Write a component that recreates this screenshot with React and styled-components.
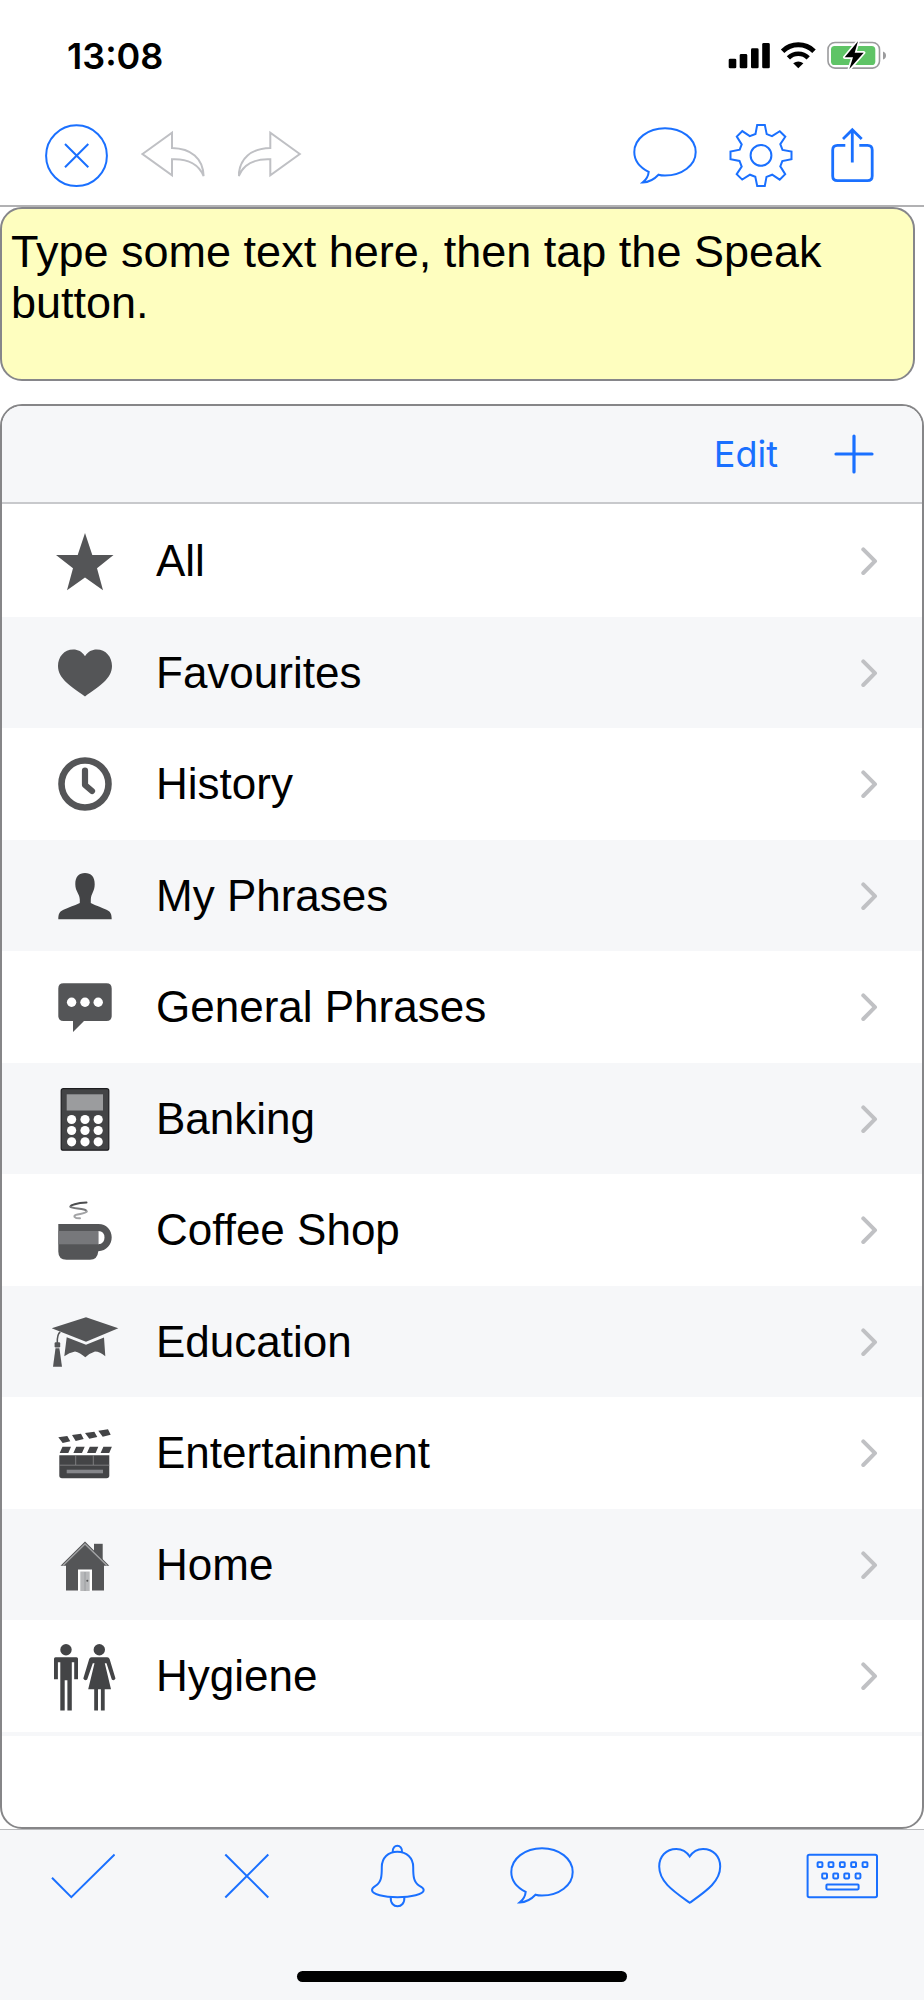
import styled, { createGlobalStyle } from "styled-components"

const categories = [
  { name: "All", icon: StarIcon },
  { name: "Favourites", icon: HeartSolidIcon },
  { name: "History", icon: ClockIcon },
  { name: "My Phrases", icon: PersonIcon },
  { name: "General Phrases", icon: ChatIcon },
  { name: "Banking", icon: CalculatorIcon },
  { name: "Coffee Shop", icon: CoffeeIcon },
  { name: "Education", icon: GraduationIcon },
  { name: "Entertainment", icon: ClapperIcon },
  { name: "Home", icon: HouseIcon },
  { name: "Hygiene", icon: RestroomIcon },
]

function App() {
  return (
    <>
      <GlobalStyle />
      <Screen>
        <StatusBar>
          <Clock>13:08</Clock>
          <StatusIcons>
            <SignalIcon />
            <WifiIcon />
            <BatteryIcon />
          </StatusIcons>
        </StatusBar>

        <Toolbar>
          <ToolGroup $gap={33}>
            <IconBtn aria-label="Clear"><ClearIcon /></IconBtn>
            <IconBtn aria-label="Undo" disabled><UndoIcon /></IconBtn>
            <IconBtn aria-label="Redo" disabled><RedoIcon /></IconBtn>
          </ToolGroup>
          <ToolGroup $gap={32}>
            <IconBtn aria-label="Speak"><BubbleIcon /></IconBtn>
            <IconBtn aria-label="Settings"><GearIcon /></IconBtn>
            <IconBtn aria-label="Share"><ShareIcon /></IconBtn>
          </ToolGroup>
        </Toolbar>

        <Message
          aria-label="Text to speak"
          placeholder="Type some text here, then tap the Speak button."
        />

        <Panel>
          <PanelHeader>
            <EditBtn>Edit</EditBtn>
            <IconBtn aria-label="Add category"><PlusIcon /></IconBtn>
          </PanelHeader>
          <List>
            {categories.map(({ name, icon: Icon }) => (
              <Item key={name}>
                <ItemLink href={"#" + name.toLowerCase().replace(" ", "-")}>
                  <Icon />
                  <Label>{name}</Label>
                  <ChevronIcon />
                </ItemLink>
              </Item>
            ))}
          </List>
        </Panel>

        <Footer>
          <QuickBar>
            <IconBtn aria-label="Yes"><CheckIcon /></IconBtn>
            <IconBtn aria-label="No"><CrossIcon /></IconBtn>
            <IconBtn aria-label="Alert"><BellIcon /></IconBtn>
            <IconBtn aria-label="Speak phrase"><BubbleIcon /></IconBtn>
            <IconBtn aria-label="Add to favourites"><HeartIcon /></IconBtn>
            <IconBtn aria-label="Keyboard"><KeyboardIcon /></IconBtn>
          </QuickBar>
          <HomeIndicator />
        </Footer>
      </Screen>
    </>
  )
}

/* status bar icons */

function SignalIcon() {
  return (
    <svg width="42" height="30" viewBox="0 0 42 30">
      <rect x="0.7" y="17.7" width="7.6" height="9.6" rx="1.4" />
      <rect x="11.7" y="13" width="7.6" height="14.3" rx="1.4" />
      <rect x="23" y="7.3" width="7.6" height="20" rx="1.4" />
      <rect x="34.2" y="2" width="7.6" height="25.3" rx="1.4" />
    </svg>
  )
}

function WifiIcon() {
  return (
    <svg width="38" height="30" viewBox="0 0 38 30" fill="none" stroke="#000">
      <path d="M3.6 10.2A22.6 22.6 0 0 1 35 10.2" strokeWidth="5" />
      <path d="M9.4 16.9A14 14 0 0 1 29.2 16.9" strokeWidth="4.6" />
      <path d="M14.2 22.2Q19.3 18.6 24.4 22.2L19.3 27.3Z" fill="#000" stroke="none" />
    </svg>
  )
}

function BatteryIcon() {
  return (
    <svg width="62" height="30" viewBox="0 0 62 30">
      <rect x="2" y="1.5" width="51.5" height="25.6" rx="7" fill="none" stroke="#9b9b9d" strokeWidth="1.6" />
      <rect x="5" y="5" width="44.3" height="19" rx="3.6" fill="#5fc466" />
      <path d="M57 10.6q3 1 3 4t-3 4z" fill="#9b9b9d" />
      <path
        d="M32 0.3L18.7 16.3H27L23.3 28L37.7 11.7H28.7Z"
        stroke="#fff"
        strokeWidth="3.4"
        paintOrder="stroke"
        strokeLinejoin="round"
      />
    </svg>
  )
}

/* toolbar icons */

function ClearIcon() {
  return (
    <Outline width="64" height="64" viewBox="0 0 64 64">
      <circle cx="32.5" cy="31.7" r="30.4" />
      <path d="M21 20L44.3 43.3M44.3 20L21 43.3" />
    </Outline>
  )
}

function UndoIcon() {
  return (
    <Outline width="64" height="64" viewBox="0 0 64 64">
      <path d="M1.5 30L31 8.8V24C50 24.5 62 34 62.6 52C58 41 47 34.5 31 35.3V51.3Z" />
    </Outline>
  )
}

function RedoIcon() {
  return (
    <Outline width="64" height="64" viewBox="0 0 64 64">
      <path d="M61.8 30L32.3 8.8V24C13.3 24.5 1.3 34 0.7 52C5.3 41 16.3 34.5 32.3 35.3V51.3Z" />
    </Outline>
  )
}

function BubbleIcon() {
  return (
    <Outline width="64" height="64" viewBox="0 0 64 64">
      <path d="M15.7 47.9C7 43.5 1.3 36.2 1.3 28C1.3 14.7 15 4.2 32 4.2S62.7 14.7 62.7 28S49 51.5 32 51.5C29.5 51.5 27.5 51.3 25.5 50.7C21 55.5 15.5 58.2 9.8 58.4C13.5 55.5 15.3 52 15.7 47.9Z" />
    </Outline>
  )
}

function GearIcon() {
  return (
    <Outline width="64" height="64" viewBox="0 0 64 64">
      <g transform="translate(32 31.4)">
        <circle r="10.4" />
        <path
          d="M-3.8 -30.5L3.8 -30.5L5.7 -21.3L11 -19.3L18.8 -24.2L24.3 -18.7L19.3 -11.2L21.5 -5.5L30.5 -3.8
          L30.5 3.8L21.3 5.7L19.3 11L24.2 18.8L18.7 24.3L11.2 19.3L5.5 21.5L3.8 30.5
          L-3.8 30.5L-5.7 21.3L-11 19.3L-18.8 24.2L-24.3 18.7L-19.3 11.2L-21.5 5.5L-30.5 3.8
          L-30.5 -3.8L-21.3 -5.7L-19.3 -11L-24.2 -18.8L-18.7 -24.3L-11.2 -19.3L-5.5 -21.5Z"
        />
      </g>
    </Outline>
  )
}

function ShareIcon() {
  return (
    <Outline $weight={2.8} width="54" height="64" viewBox="0 0 54 64">
      <path d="M20.3 21.3H12.5Q7.7 21.3 7.7 26V52Q7.7 56.7 12.5 56.7H42.5Q47.2 56.7 47.2 52V26Q47.2 21.3 42.5 21.3H34.3" />
      <path d="M27.3 38.5V6M18 15L27.3 5.8L36.7 15" />
    </Outline>
  )
}

function PlusIcon() {
  return (
    <Outline $weight={3.2} width="40" height="40" viewBox="0 0 40 40">
      <path d="M20 2V38M2 20H38" strokeLinecap="round" />
    </Outline>
  )
}

/* quick bar icons */

function CheckIcon() {
  return (
    <Outline width="64" height="64" viewBox="0 0 64 64">
      <path d="M1 33.7L20.3 53.2L63.6 10.5" />
    </Outline>
  )
}

function CrossIcon() {
  return (
    <Outline width="88" height="64" viewBox="0 0 88 64">
      <path d="M26.3 10.5L69.3 53.5M69.3 10.5L26.3 53.5" />
    </Outline>
  )
}

function BellIcon() {
  return (
    <Outline width="54" height="64" viewBox="0 0 54 64">
      <path d="M21.7 8.2C21 -0.3 31.7 -0.3 31 8.2" />
      <path d="M26.3 7.7C17 7.7 10.8 14 10.8 23C10.8 32 10.5 38.5 4.5 41.8C2 43.2 1 44.5 1 46C1 50.5 13 53.2 26.5 53.2S52.7 50.5 52.7 46C52.7 44.5 51 43.2 48.5 41.8C42.5 38.5 42.2 32 42.2 23C42.2 14 35.8 7.7 26.3 7.7Z" />
      <path d="M19.8 53.2C18.5 65.3 34.5 65.3 33.3 53.2" />
    </Outline>
  )
}

function HeartIcon() {
  return (
    <Outline width="64" height="64" viewBox="0 0 64 64">
      <path d="M31.7 12.5C28.5 7.5 24 4.9 18.3 4.9C8 4.9 1.2 12.5 1.2 22.5C1.2 38 16 47.5 31.7 58.8C47.5 47.5 62.2 38 62.2 22.5C62.2 12.5 55.4 4.9 45 4.9C39.4 4.9 34.9 7.5 31.7 12.5Z" />
    </Outline>
  )
}

function KeyboardIcon() {
  return (
    <Outline width="72" height="64" viewBox="0 0 72 64">
      <rect x="1.6" y="10.7" width="69.400" height="42.6" rx="1.8" />
      {[14, 25, 36.3, 47.6, 59].map((x) => (
        <rect key={x} x={x - 2.4} y="18.3" width="4.8" height="4.8" rx="0.8" />
      ))}
      {[18.6, 29.7, 40.7, 52].map((x) => (
        <rect key={x} x={x - 2.4} y="29.6" width="4.8" height="4.8" rx="0.8" />
      ))}
      <rect x="20.4" y="40.6" width="32.2" height="4.8" rx="0.8" />
    </Outline>
  )
}

/* list icons */

function ChevronIcon() {
  return (
    <svg width="18" height="28" viewBox="0 0 18 28" fill="none" stroke="#c0c1c4" strokeWidth="4">
      <path d="M3.3 2.4L15 14.2L3.3 26" strokeLinecap="round" strokeLinejoin="round" />
    </svg>
  )
}

function StarIcon() {
  return (
    <Glyph viewBox="0 0 72 72">
      <path d="M36 8L43.3 30H64.5L48 43.3L54 65.3L36 52.5L18 65.3L24 43.3L7 30H28.7Z" />
    </Glyph>
  )
}

function HeartSolidIcon() {
  return (
    <Glyph viewBox="0 0 72 72">
      <path d="M36 19.2C33 14.5 29 12.5 24.3 12.5C15 12.5 9 20 9 29C9 42 22 49 36 59.5C50 49 63 42 63 29C63 20 57 12.5 47.7 12.5C43 12.5 39 14.5 36 19.2Z" />
    </Glyph>
  )
}

function ClockIcon() {
  return (
    <Glyph viewBox="0 0 72 72">
      <g fill="none" stroke="#545557">
        <circle cx="36" cy="36" r="23.5" strokeWidth="6.6" />
        <path d="M36 22.5V37L43 43" strokeWidth="6.2" strokeLinecap="round" strokeLinejoin="round" />
      </g>
    </Glyph>
  )
}

function PersonIcon() {
  return (
    <Glyph viewBox="0 0 72 72" $dark>
      <path d="M36 13C42 13 45.700 16.700 45.7 24.200C45.7 31.700 41.8 33.700 41.8 39.700V43C47 45.700 53 47.700 57.5 49.700C61.5 51.500 62.7 53.700 62.7 59.3H9.3C9.3 53.700 10.5 51.500 14.5 49.700C19 47.700 25 45.700 30.800 43V39.700C30.800 33.700 26.3 31.700 26.3 24.200C26.3 16.700 30 13 36 13Z" />
    </Glyph>
  )
}

function ChatIcon() {
  return (
    <Glyph viewBox="0 0 72 72">
      <path d="M14.5 12.3H57.5Q62.7 12.3 62.7 17.5V44.8Q62.7 50 57.5 50H35L24 61V50H14.5Q9.3 50 9.3 44.8V17.5Q9.3 12.3 14.5 12.3Z" />
      {[22.6, 36, 49.2].map((x) => (
        <circle key={x} cx={x} cy="31.3" r="4.7" fill="#fff" />
      ))}
    </Glyph>
  )
}

function CalculatorIcon() {
  return (
    <Glyph viewBox="0 0 72 72" $dark>
      <rect x="12.2" y="5.7" width="47.6" height="61.5" rx="2" stroke="#1d1d20" strokeWidth="1.2" />
      <rect x="17.7" y="11.3" width="36.3" height="16.2" fill="#9b9c9e" />
      {[36.5, 47.5, 58.8].map((y) =>
        [22.6, 36, 49.2].map((x) => <circle key={x + y} cx={x} cy={y} r="4.6" fill="#fff" />)
      )}
    </Glyph>
  )
}

function CoffeeIcon() {
  return (
    <Glyph viewBox="0 0 72 72">
      <path
        fillRule="evenodd"
        d="M9.3 30H49.5C57.5 30 62.7 36 62.7 43.3S57.5 57 49.3 57.2Q48.5 65.7 41 65.7H17.5Q9.3 65.7 9.3 57.5ZM49.3 37V50.3Q55.500 50 55.500 43.6T49.3 37Z"
      />
      <rect x="9.3" y="37" width="40" height="13.3" fill="#77787b" />
      <g fill="none" strokeWidth="2" strokeLinecap="round">
        <path d="M37.5 8.500C28 9 21 11 21.5 12.800" stroke="#4c4d4f" />
        <path d="M21.5 12.800C23 15 38 14 37.5 17.500" stroke="#77787a" />
        <path d="M37.5 17.500C36.5 20.500 24.5 19.500 25.5 22.800Q27 24.500 31 24.300" stroke="#a2a3a5" />
      </g>
    </Glyph>
  )
}

function GraduationIcon() {
  return (
    <Glyph viewBox="0 0 72 72">
      <path d="M2.7 22.2L37 11.2L69.3 22.2L37 35.8Z" />
      <path d="M17.7 31.3L37 38.7L55 31.6L56.3 50.2Q51 45.5 46 45.5Q41 47 36.3 51.3Q31 46.5 26 45.5Q20 46.5 15.3 50.2Z" />
      <path d="M11.3 26Q8 28 8.3 37" fill="none" stroke="#545557" strokeWidth="1.5" />
      <rect x="5.6" y="36.2" width="5.6" height="5.2" rx="1.2" />
      <path d="M6.5 42.3H10.4L13 60.8H4Z" />
    </Glyph>
  )
}

function ClapperIcon() {
  return (
    <Glyph viewBox="0 0 72 72" $dark>
      <path d="M9.3 20.3L18.3 19L21.3 24.3L13.7 26ZM23 18L32 16.7L34.7 22L26.7 24ZM36 16L45.3 14.7L48.3 20L40.3 21.7ZM49.3 13.7L59 12.3L61.7 17.7L53.7 19.7Z" />
      <path d="M13.5 29.7H22L19.3 36H10.7ZM27.2 29.7H35.7L33 36H24.4ZM40.8 29.7H49.3L46.6 36H38ZM54.4 29.7H62.9L60.2 36H51.6Z" />
      <path d="M10.3 38.3H60.3V58.5Q60.3 61.3 57.5 61.3H13Q10.3 61.3 10.3 58.5Z" />
      <path d="M10.3 48.2H60.3M26.7 38.3V48M44.3 38.3V48" stroke="#8a8b8d" strokeWidth="0.8" />
      <rect x="17.7" y="52.7" width="36.3" height="3.6" fill="#85868a" />
    </Glyph>
  )
}

function HouseIcon() {
  return (
    <Glyph viewBox="0 0 72 72">
      <path d="M45 14.8H53.7V34H45Z" />
      <path d="M36 12.5L60.3 36.8H55V61.6H17V36.8H11.5Z" />
      <path d="M14 36.5L36 15L58 36.5" fill="none" stroke="#a3a4a6" strokeWidth="1.3" />
      <rect x="29" y="40.5" width="14" height="21.5" fill="#fff" />
      <rect x="31.3" y="42.5" width="9.4" height="19.5" fill="#b7b8ba" />
      <path d="M36 43V62" stroke="#96979a" strokeWidth="0.8" />
      <circle cx="38.3" cy="51.8" r="1" />
    </Glyph>
  )
}

function RestroomIcon() {
  return (
    <Glyph viewBox="0 0 72 72" $dark>
      <circle cx="17" cy="9.7" r="5.7" />
      <path d="M6.5 17.3H27.5Q29 17.3 29 18.8V39.3H25.2V22.3H22.8V70.5H18.4V40.3H15.7V70.5H11.3V22.3H8.9V39.3H5V18.8Q5 17.3 6.5 17.3Z" />
      <circle cx="50.3" cy="9.7" r="5.7" />
      <path d="M42.5 17.3H58.2Q60 17.3 60.6 19L66.5 38.5Q65 41.2 62.8 39.5L57.5 23.3H55.8L62 49.2H55.7V70.5H51.9V49.2H49V70.5H45.2V49.2H39.2L45.5 23.3H43.8L38.2 39.5Q35.8 41.2 34.3 38.5L40.2 19Q40.8 17.3 42.5 17.3Z" />
    </Glyph>
  )
}

const GlobalStyle = createGlobalStyle`
  * {
    box-sizing: border-box;
  }

  body {
    margin: 0;
    background-color: #ffffff;
    font-family: 'Liberation Sans', Arial, sans-serif;
    color: #000000;
  }
`

const Screen = styled.div`
  display: flex;
  flex-direction: column;
  min-height: 100vh;
`

const StatusBar = styled.div`
  display: flex;
  align-items: center;
  justify-content: space-between;
  height: 112px;
  padding: 0 36px 0 67px;
`

const Clock = styled.span`
  font-family: Inter, sans-serif;
  font-size: 36px;
  font-weight: 600;
`

const StatusIcons = styled.div`
  display: flex;
  gap: 9px;
`

const Toolbar = styled.header`
  display: flex;
  align-items: center;
  justify-content: space-between;
  height: 95px;
  padding: 0 45px 5px 44px;
  border-bottom: 2px solid #b1b1b3;
`

const ToolGroup = styled.div`
  display: flex;
  gap: ${({ $gap }) => $gap}px;
`

const IconBtn = styled.button`
  display: flex;
  padding: 0;
  border: none;
  background: none;
  color: #1a70ff;
  cursor: pointer;

  &:disabled {
    color: #bfc0c4;
    cursor: default;
  }
`

const Outline = styled.svg`
  fill: none;
  stroke: currentColor;
  stroke-width: ${({ $weight }) => $weight || 2};
`

const Message = styled.textarea`
  display: block;
  height: 174px;
  margin: 0 9px 23px 0;
  padding: 17px 9px;
  border: 2px solid #86868a;
  border-radius: 22px;
  background-color: #fefebf;
  font-family: inherit;
  font-size: 45px;
  line-height: 51px;
  color: #000000;
  resize: none;
  outline: none;

  &::placeholder {
    color: #000000;
    opacity: 1;
  }
`

const Panel = styled.main`
  flex: 1;
  border: 2px solid #868688;
  border-radius: 22px;
  background-color: #ffffff;
  overflow: hidden;
`

const PanelHeader = styled.div`
  display: flex;
  align-items: center;
  justify-content: flex-end;
  gap: 56px;
  height: 98px;
  padding-right: 48px;
  border-bottom: 2px solid #c8c9cc;
  background-color: #f6f7f9;
`

const EditBtn = styled(IconBtn)`
  font-family: Inter, sans-serif;
  font-size: 36px;
`

const List = styled.ul`
  margin: 0;
  padding: 1px 0 0;
  list-style: none;
  border-bottom: 4px solid #f6f7f9;
`

const Item = styled.li`
  height: 112px;

  &:nth-child(even) {
    height: 111px;
    background-color: #f6f7f9;
  }
`

const ItemLink = styled.a`
  display: flex;
  align-items: center;
  height: 100%;
  padding: 0 44px 0 47px;
  color: inherit;
  text-decoration: none;
`

const Glyph = styled.svg`
  width: 72px;
  height: 72px;
  flex-shrink: 0;
  fill: ${({ $dark }) => ($dark ? "#434446" : "#545557")};
`

const Label = styled.span`
  flex: 1;
  padding-left: 35px;
  font-size: 44px;
`

const Footer = styled.footer`
  display: flex;
  flex-direction: column;
  align-items: center;
  justify-content: space-between;
  height: 171px;
  padding: 14px 0 18px;
  border-top: 1px solid #b9babc;
  background-color: #f6f7f9;
`

const QuickBar = styled.nav`
  display: flex;
  justify-content: space-between;
  width: 100%;
  padding: 0 46px 0 51px;
`

const HomeIndicator = styled.div`
  width: 330px;
  height: 11px;
  border-radius: 6px;
  background-color: #000000;
`

export default App
